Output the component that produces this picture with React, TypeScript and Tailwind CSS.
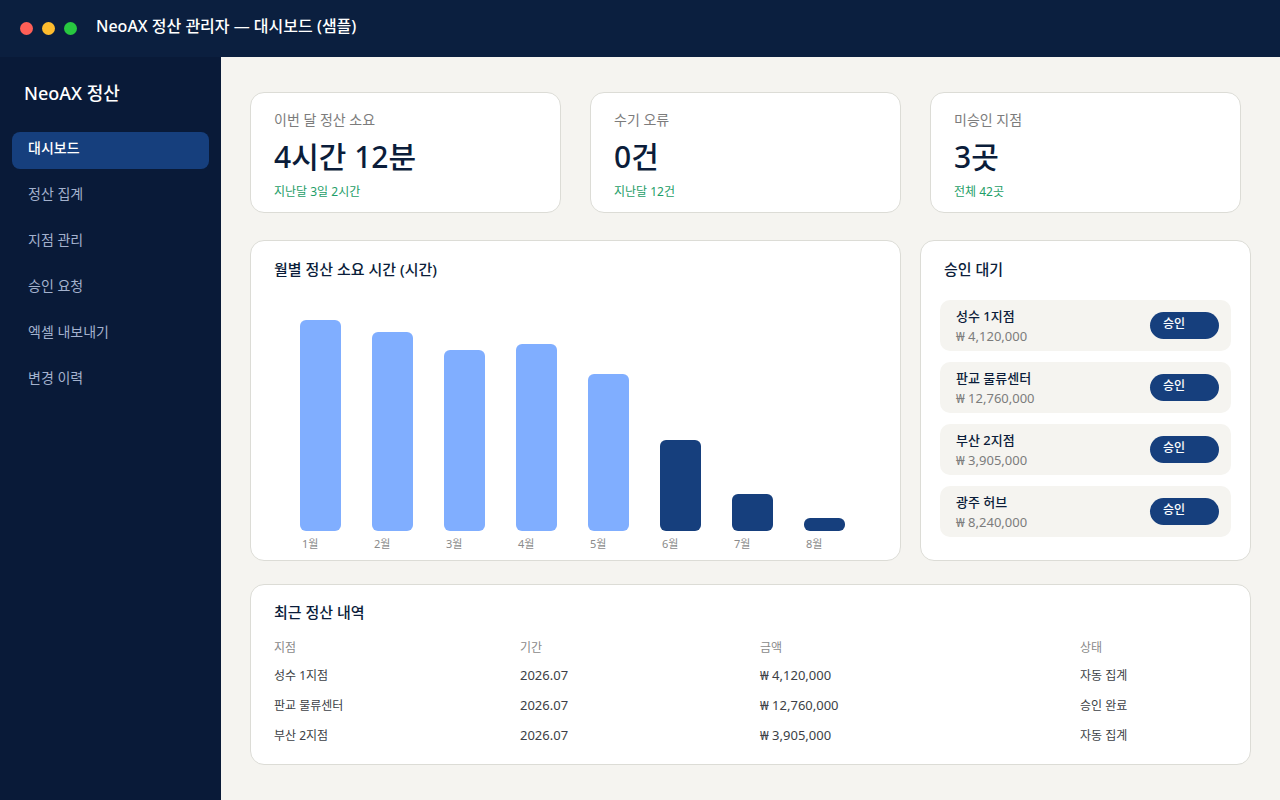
import React, { useState } from 'react';

interface Stat {
  label: string;
  value: string;
  note: string;
}

interface Approval {
  branch: string;
  amount: string;
}

interface Settlement {
  branch: string;
  period: string;
  amount: string;
  status: string;
}

const menu = ['대시보드', '정산 집계', '지점 관리', '승인 요청', '엑셀 내보내기', '변경 이력'];

const stats: Stat[] = [
  { label: '이번 달 정산 소요', value: '4시간 12분', note: '지난달 3일 2시간' },
  { label: '수기 오류', value: '0건', note: '지난달 12건' },
  { label: '미승인 지점', value: '3곳', note: '전체 42곳' },
];

const months = [
  { name: '1월', hours: 35 },
  { name: '2월', hours: 33 },
  { name: '3월', hours: 30 },
  { name: '4월', hours: 31 },
  { name: '5월', hours: 26 },
  { name: '6월', hours: 15 },
  { name: '7월', hours: 6 },
  { name: '8월', hours: 2 },
];

const approvals: Approval[] = [
  { branch: '성수 1지점', amount: '₩ 4,120,000' },
  { branch: '판교 물류센터', amount: '₩ 12,760,000' },
  { branch: '부산 2지점', amount: '₩ 3,905,000' },
  { branch: '광주 허브', amount: '₩ 8,240,000' },
];

const settlements: Settlement[] = [
  { branch: '성수 1지점', period: '2026.07', amount: '₩ 4,120,000', status: '자동 집계' },
  { branch: '판교 물류센터', period: '2026.07', amount: '₩ 12,760,000', status: '승인 완료' },
  { branch: '부산 2지점', period: '2026.07', amount: '₩ 3,905,000', status: '자동 집계' },
];

function TitleBar() {
  return (
    <header className="flex h-[57px] items-center bg-[#0b1f3f] px-5">
      <div className="flex gap-[9px]">
        <span className="h-[13px] w-[13px] rounded-full bg-[#ff5f57]" />
        <span className="h-[13px] w-[13px] rounded-full bg-[#febc2e]" />
        <span className="h-[13px] w-[13px] rounded-full bg-[#28c840]" />
      </div>
      <h1 className="ml-[19px] pb-1.5 text-base font-medium text-white">
        NeoAX 정산 관리자 — 대시보드 (샘플)
      </h1>
    </header>
  );
}

function Sidebar() {
  const [active, setActive] = useState(menu[0]);

  return (
    <aside className="w-[221px] shrink-0 bg-[#091a38] px-3 pt-6">
      <p className="px-3 text-lg leading-[25px] font-medium text-white">NeoAX 정산</p>
      <nav className="mt-[26px] flex flex-col gap-[9px]">
        {menu.map((item) => (
          <a
            key={item}
            href="#"
            onClick={() => setActive(item)}
            className={`flex h-[37px] items-center rounded-lg px-4 pb-1.5 text-sm ${
              item === active ? 'bg-[#163f7d] font-medium text-white' : 'text-[#a3b1cd]'
            }`}
          >
            {item}
          </a>
        ))}
      </nav>
    </aside>
  );
}

function StatCard({ label, value, note }: Stat) {
  return (
    <div className="rounded-[14px] border border-[#dcdcd6] bg-white px-[23px] pt-[17px] pb-[11px]">
      <p className="text-sm leading-5 text-[#7c7c7c]">{label}</p>
      <p className="my-1 text-3xl leading-[45px] font-medium text-[#0b1d3a]">{value}</p>
      <p className="text-xs leading-[18px] text-[#1e9e68]">{note}</p>
    </div>
  );
}

function MonthlyChart() {
  return (
    <section className="rounded-[14px] border border-[#dcdcd6] bg-white pt-[17px] pb-2">
      <h2 className="px-[23px] text-[15px] leading-[22px] font-medium text-[#0b1d3a]">
        월별 정산 소요 시간 (시간)
      </h2>
      <div className="mt-10 grid grid-cols-8 pr-6 pl-[49px]">
        {months.map((m) => (
          <div key={m.name} className="flex h-[232px] flex-col justify-end">
            <div
              className={`w-[41px] rounded-md ${m.hours > 20 ? 'bg-[#80aeff]' : 'bg-[#163f7d]'}`}
              style={{ height: m.hours * 6 + 1 }}
            />
            <span className="mt-[5px] pl-[2px] text-[11px] leading-4 text-[#8a8a8a]">{m.name}</span>
          </div>
        ))}
      </div>
    </section>
  );
}

function ApprovalQueue() {
  return (
    <section className="rounded-[14px] border border-[#dcdcd6] bg-white px-[19px] pt-[17px] pb-[23px]">
      <h2 className="px-1 text-[15px] leading-[22px] font-medium text-[#0b1d3a]">승인 대기</h2>
      <ul className="mt-5 flex flex-col gap-[11px]">
        {approvals.map((a) => (
          <li
            key={a.branch}
            className="flex h-[51px] items-center justify-between rounded-[10px] bg-[#f5f4f0] pr-3 pl-4"
          >
            <div>
              <p className="text-[13px] leading-5 font-medium text-[#0b1d3a]">{a.branch}</p>
              <p className="text-[13px] leading-5 text-[#7c7c7c]">{a.amount}</p>
            </div>
            <button
              type="button"
              className="h-[27px] w-[69px] rounded-full bg-[#163f7d] px-[13px] pb-1 text-left text-xs font-medium text-white"
            >
              승인
            </button>
          </li>
        ))}
      </ul>
    </section>
  );
}

function RecentTable() {
  return (
    <section className="rounded-[14px] border border-[#dcdcd6] bg-white px-[23px] pt-4 pb-[13px]">
      <h2 className="text-[15px] leading-[22px] font-medium text-[#0b1d3a]">최근 정산 내역</h2>
      <table className="mt-3 w-full table-fixed text-left text-xs text-[#3c3f46]">
        <thead>
          <tr className="h-[26px] text-[#8a8a8a]">
            <th className="w-[246px] font-normal">지점</th>
            <th className="w-[240px] font-normal">기간</th>
            <th className="w-[320px] font-normal">금액</th>
            <th className="font-normal">상태</th>
          </tr>
        </thead>
        <tbody>
          {settlements.map((s) => (
            <tr key={s.branch} className="h-[30px]">
              <td>{s.branch}</td>
              <td className="text-[13px]">{s.period}</td>
              <td className="text-[13px]">{s.amount}</td>
              <td>{s.status}</td>
            </tr>
          ))}
        </tbody>
      </table>
    </section>
  );
}

export default function App() {
  return (
    <div className="flex min-h-screen flex-col bg-[#f5f4f0] font-['Noto_Sans','Noto_Sans_CJK_KR',sans-serif]">
      <TitleBar />
      <div className="flex flex-1">
        <Sidebar />
        <main className="min-w-0 flex-1 px-[29px] pt-[35px] pb-[35px]">
          <div className="grid grid-cols-3 gap-[29px] pr-[10px]">
            {stats.map((s) => (
              <StatCard key={s.label} {...s} />
            ))}
          </div>
          <div className="mt-[27px] grid grid-cols-[1fr_331px] gap-[19px]">
            <MonthlyChart />
            <ApprovalQueue />
          </div>
          <div className="mt-[23px]">
            <RecentTable />
          </div>
        </main>
      </div>
    </div>
  );
}
